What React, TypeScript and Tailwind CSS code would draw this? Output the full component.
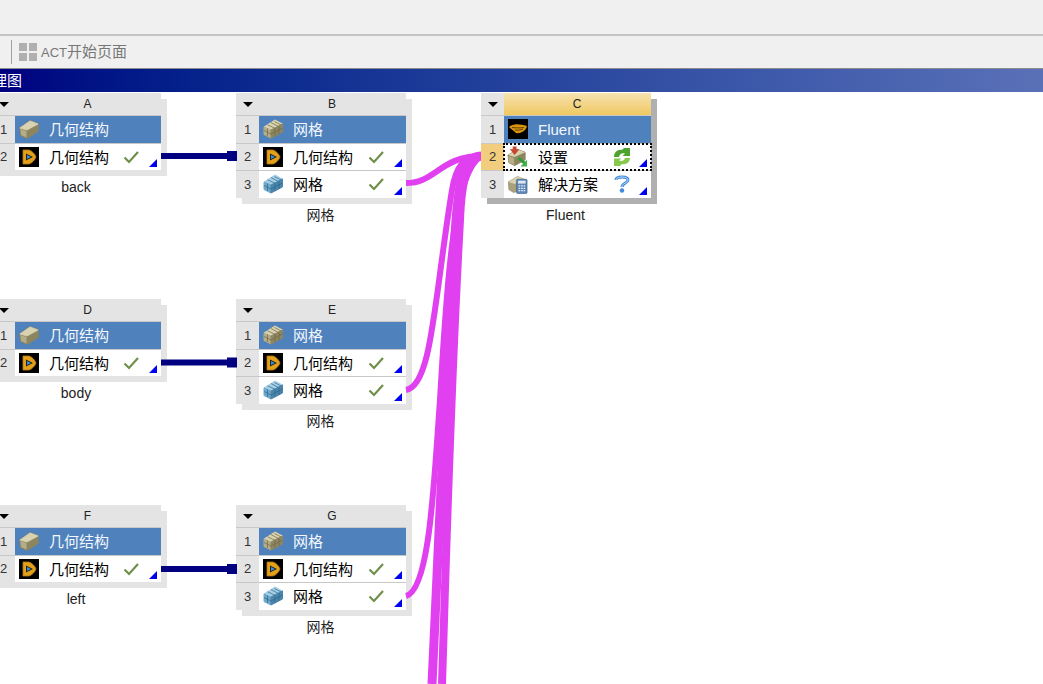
import React from 'react';

const FONT = { fontFamily: '"Liberation Sans", "Noto Sans CJK SC", sans-serif' };

const GeoIcon = () => (
  <svg width="20" height="20" viewBox="0 0 20 20" strokeLinejoin="round">
    <path d="M1 9 L11 2 L19 5 L19 12 L8 19 L2 16 Z" fill="#8d8560" stroke="#8d8560" strokeWidth="1.500" />
    <path d="M1 9 L11 2 L19 5 L8 11 Z" fill="#d9d3b3" stroke="#d9d3b3" strokeWidth="0.800" />
    <path d="M1.500 10 L7.500 12 L7.500 18.500 L2 16 Z" fill="#b5ad88" />
  </svg>
);

const MeshIcon = ({ blue }: { blue?: boolean }) => {
  const top = blue ? '#a5cfe6' : '#d8d2b0';
  const left = blue ? '#6fa8cb' : '#b5ad88';
  const right = blue ? '#4a86ac' : '#8f8660';
  const line = blue ? '#2f6688' : '#6f6848';
  return (
    <svg width="20" height="20" viewBox="0 0 20 20" strokeLinejoin="round">
      <path d="M1 8 L12 1 L19.500 5 L8 11 Z" fill={top} stroke={top} />
      <path d="M1 8 L8 11 L8 19 L1 15.500 Z" fill={left} stroke={left} />
      <path d="M8 11 L19.500 5 L19.500 13 L8 19 Z" fill={right} stroke={right} />
      <path d="M4.500 5.800 L11.500 9 M8 3.500 L15 7.300 M11.500 2.500 L18 6 M4.500 9.500 L4.500 17 M12 9 L12 17 M16 7 L16 15 M1 11.500 L8 15 L19.500 9" stroke={line} strokeWidth="0.700" fill="none" />
    </svg>
  );
};

const PlayIcon = () => (
  <svg width="20" height="20" viewBox="0 0 20 20" strokeLinejoin="round">
    <rect width="20" height="20" fill="#000" />
    <path d="M4 3 L10 3 C13 4 16 7 17 10 C16 13 13 16 10 17 L4 17 Z" fill="#e3a01b" stroke="#b87a10" strokeWidth="0.800" />
    <path d="M7 6.500 L14 10 L7 13.500 Z" fill="#26211a" />
    <path d="M8 8 L12 10 L8 12 Z" fill="#2b8fe6" />
  </svg>
);

const FluentIcon = () => (
  <svg width="20" height="20" viewBox="0 0 20 20">
    <rect width="20" height="20" fill="#000" />
    <path d="M1 8 C5 4 12 5 19 7 C18 12 12 15 8 14 C6 12 3 10 1 8 Z" fill="#d9950f" />
    <path d="M4 8.500 C8 9 12 9 16 8.500 M7 11 C10 11.500 12 11 15 10" stroke="#5a3c05" strokeWidth="0.900" fill="none" />
  </svg>
);

const SetupIcon = () => (
  <svg width="22" height="22" viewBox="0 0 22 22" strokeLinejoin="round" className="-mt-[1px] -ml-[1px]">
    <path d="M1 9 L11 3 L19 6 L19 14 L8 20 L2 17 Z" fill="#8f8660" stroke="#8f8660" />
    <path d="M1 9 L11 3 L19 6 L8 11 Z" fill="#d8d2b0" />
    <path d="M1.500 10 L7.500 12 L7.500 19.500 L2 17 Z" fill="#b5ad88" />
    <path d="M6 0 H10 V3 H13 L8 9 L3 3 H6 Z" fill="#c9452d" />
    <path d="M12 12 L19 18" stroke="#2e9c3b" strokeWidth="3" fill="none" />
    <path d="M14 21 H21 V14 Z" fill="#45b24f" />
  </svg>
);

const SolveIcon = () => (
  <svg width="21" height="21" viewBox="0 0 21 21" strokeLinejoin="round">
    <path d="M0 8 L10 2 L17 5 L17 15 L6 19 L1 16 Z" fill="#a9a17b" stroke="#8f8660" strokeWidth="0.600" />
    <path d="M0.500 8 L10 2 L17 5 L7 10 Z" fill="#d8d2b0" />
    <rect x="9" y="5" width="11" height="15" rx="1" fill="#5f86b8" stroke="#36587f" strokeWidth="0.600" />
    <rect x="10.500" y="6.500" width="8" height="3" fill="#dce8f4" />
    <path d="M11 12 H12.800 M13.700 12 H15.500 M16.400 12 H18 M11 14.500 H12.800 M13.700 14.500 H15.500 M16.400 14.500 H18 M11 17 H12.800 M13.700 17 H15.500 M16.400 17 H18" stroke="#e6eef7" strokeWidth="1.400" />
  </svg>
);

const Check = () => (
  <svg width="16" height="14" viewBox="0 0 16 14">
    <path d="M1.500 7.500 L6 12 L15 2" stroke="#6f8f4a" strokeWidth="2.200" fill="none" />
  </svg>
);

const Refresh = () => (
  <svg width="18" height="18" viewBox="0 0 18 18" className="-mr-[2px]">
    <path d="M1 9 C1 4 5 1 9 2 L11 0 L17 0 L17 8 L9.500 8 L12 5.500 C9 4.500 6.500 6 6 9 Z" fill="#4ea32f" />
    <path d="M17 10 C17 14 13 17 9 16 L7 18 L1 18 L1 10.500 L8.500 10.500 L6 12.500 C9 13.500 11.500 12.500 12 10 Z" fill="#86c94d" />
  </svg>
);

const Question = () => (
  <svg width="16" height="18" viewBox="0 0 16 18" className="-mr-[1px]">
    <path d="M2 5 C2 1 14 1 14 5 C14 8 8 8 8 12" stroke="#3f86dc" strokeWidth="3" fill="none" />
    <path d="M2 5 C2 1 14 1 14 5 C14 8 8 8 8 12" stroke="#bcdcfa" strokeWidth="1" fill="none" />
    <circle cx="8" cy="15.500" r="2.200" fill="#3f86dc" />
  </svg>
);

const Corner = () => (
  <span className="absolute right-[4px] bottom-[3px] h-0 w-0 border-b-[8px] border-l-[8px] border-b-[#0000f0] border-l-transparent" />
);

type Row = {
  icon: React.ReactNode;
  text: string;
  status?: React.ReactNode;
  head?: boolean;
  focus?: boolean;
};

function Block({ x, y, w = 170, letter, rows, label, active, dark }: {
  x: number; y: number; w?: number; letter: string; rows: Row[]; label: string; active?: boolean; dark?: boolean;
}) {
  return (
    <div className="absolute" style={{ left: x, top: y, width: w }}>
      <div className={`absolute top-[6px] left-[6px] h-full w-full ${dark ? 'bg-[#b0b0b0]' : 'bg-[#e4e4e4]'}`} />
      <div className="relative flex flex-col bg-[#e4e4e4]">
        <div className="flex h-[22px]">
          <div className="flex w-[23px] items-center justify-center">
            <span className="h-0 w-0 border-x-[5px] border-t-[5px] border-x-transparent border-t-black" />
          </div>
          <div className={`flex-1 pr-[1px] text-center text-[12px] leading-[23px] text-[#222] ${active ? 'bg-gradient-to-b from-[#f6e3ae] to-[#f0c860]' : ''}`}>
            {letter}
          </div>
        </div>
        {rows.map((r, i) => (
          <div key={i} className="flex h-[27.500px] border-t border-[#c8c8c8]">
            <div className={`flex w-[23px] items-center justify-center text-[13px] text-[#333] ${r.focus ? 'bg-[#f2cd7d]' : ''}`}>
              {i + 1}
            </div>
            <div className={`relative flex flex-1 items-center text-[15px] ${r.head ? 'bg-[#4f81bd] text-[#f4f8fc]' : 'bg-white text-black'} ${r.focus ? 'outline-2 outline-dotted outline-black -outline-offset-1' : ''}`}>
              <span className="ml-[4px] flex h-[20px] w-[20px]">{r.icon}</span>
              <span className="ml-[10px] pt-[2px]">{r.text}</span>
              {r.status && <span className="absolute right-[22px] top-1/2 flex -translate-y-1/2">{r.status}</span>}
              {!r.head && <Corner />}
            </div>
          </div>
        ))}
      </div>
      <div className="absolute top-full left-0 mt-[8px] w-full pr-[1px] text-center text-[14px] leading-[18px] text-[#222]">{label}</div>
    </div>
  );
}

const geoBlock = (letter: string, y: number, label: string) => (
  <Block
    x={-8}
    y={y}
    w={169}
    letter={letter}
    label={label}
    rows={[
      { icon: <GeoIcon />, text: '几何结构', head: true },
      { icon: <PlayIcon />, text: '几何结构', status: <Check /> },
    ]}
  />
);

const meshBlock = (letter: string, y: number) => (
  <Block
    x={236}
    y={y}
    letter={letter}
    label="网格"
    rows={[
      { icon: <MeshIcon />, text: '网格', head: true },
      { icon: <PlayIcon />, text: '几何结构', status: <Check /> },
      { icon: <MeshIcon blue />, text: '网格', status: <Check /> },
    ]}
  />
);

function Links() {
  const pink = '#e040f0';
  return (
    <svg className="absolute inset-0" width="1043" height="684" viewBox="0 0 1043 684" fill="none">
      {[156, 362.5, 569].map((y) => (
        <g key={y}>
          <rect x="161" y={y - 3} width="68" height="6" fill="#000080" />
          <rect x="227" y={y - 5} width="10" height="10" fill="#000080" />
        </g>
      ))}
      <g stroke={pink} strokeLinecap="butt">
        <path d="M406 183 C436 183 440 156 482 156" strokeWidth="6" />
        <path d="M406 390 C432 386 434 300 452 190 C456 166 464 156 482 156" strokeWidth="6" />
        <path d="M406 596 C430 590 434 480 440 400 C446 300 452 170 482 156" strokeWidth="6" />
        <path d="M432 684 C438 560 444 400 456 220 C460 170 466 156 482 156" strokeWidth="9" />
        <path d="M442 684 C446 560 450 400 460 220 C462 170 470 156 482 156" strokeWidth="8" />
      </g>
    </svg>
  );
}

export default function App() {
  return (
    <div className="flex h-[684px] w-[1043px] flex-col overflow-hidden bg-white" style={FONT}>
      <div className="h-[36px] border-b-2 border-[#c4c4c4] bg-[#f0f0f0]" />
      <div className="flex h-[33px] items-center border-b border-[#8c8c8c] bg-[#f0f0f0] pl-[11px]">
        <span className="h-[24px] w-[1px] bg-[#a0a0a0]" />
        <span className="ml-[7px] grid grid-cols-2 gap-[2px]">
          <i className="h-[8px] w-[8px] bg-[#b0b0b0]" />
          <i className="h-[8px] w-[8px] bg-[#b0b0b0]" />
          <i className="h-[8px] w-[8px] bg-[#b0b0b0]" />
          <i className="h-[8px] w-[8px] bg-[#b0b0b0]" />
        </span>
        <span className="ml-[4px] text-[15px] text-[#777]"><span className="text-[13px]">ACT</span>开始页面</span>
      </div>
      <div className="flex h-[23px] items-center overflow-hidden bg-gradient-to-r from-[#000080] to-[#5a71b8]">
        <span className="-ml-[8px] pt-[2px] text-[15px] text-white">理图</span>
      </div>
      <div className="relative flex-1">
        <div className="absolute top-[-92px] left-0 h-[684px] w-[1043px]">
          {geoBlock('A', 93, 'back')}
          {geoBlock('D', 299, 'body')}
          {geoBlock('F', 505, 'left')}
          {meshBlock('B', 93)}
          {meshBlock('E', 299)}
          {meshBlock('G', 505)}
          <Links />
          <Block
            x={481}
            y={93}
            letter="C"
            label="Fluent"
            active
            dark
            rows={[
              { icon: <FluentIcon />, text: 'Fluent', head: true },
              { icon: <SetupIcon />, text: '设置', status: <Refresh />, focus: true },
              { icon: <SolveIcon />, text: '解决方案', status: <Question /> },
            ]}
          />
        </div>
      </div>
    </div>
  );
}
